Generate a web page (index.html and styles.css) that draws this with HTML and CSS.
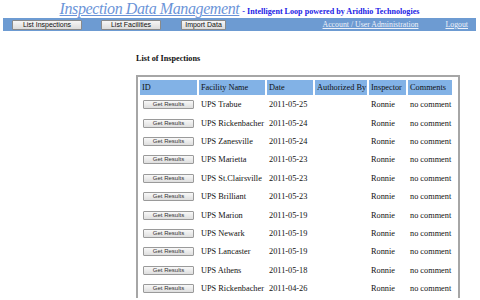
FILE: index.html
```html
<!DOCTYPE html>
<html>
<head>
<meta charset="utf-8">
<link rel="stylesheet" href="styles.css">
</head>
<body>
<header class="top">
  <div class="brand">
    <a class="title" href="#">Inspection Data Management</a>
    <span class="sub">- Intelligent Loop powered by Aridhio Technologies</span>
  </div>
  <nav class="bar">
    <div class="btns">
      <button class="nb nb1">List Inspections</button>
      <button class="nb nb2">List Facilities</button>
      <button class="nb nb3">Import Data</button>
    </div>
    <div class="links">
      <a href="#">Account / User Administration</a>
      <a href="#">Logout</a>
    </div>
  </nav>
</header>
<main class="content">
  <h2 class="heading">List of Inspections</h2>
  <div class="box">
    <table class="grid">
      <colgroup>
        <col class="c1"><col class="c2"><col class="c3"><col class="c4"><col class="c5"><col class="c6">
      </colgroup>
      <thead>
        <tr><th>ID</th><th>Facility Name</th><th>Date</th><th>Authorized By</th><th>Inspector</th><th>Comments</th></tr>
      </thead>
      <tbody>
        <tr><td><button class="gr">Get Results</button></td><td>UPS Trabue</td><td>2011-05-25</td><td></td><td>Ronnie</td><td>no comment</td></tr>
        <tr><td><button class="gr">Get Results</button></td><td>UPS Rickenbacher</td><td>2011-05-24</td><td></td><td>Ronnie</td><td>no comment</td></tr>
        <tr><td><button class="gr">Get Results</button></td><td>UPS Zanesville</td><td>2011-05-24</td><td></td><td>Ronnie</td><td>no comment</td></tr>
        <tr><td><button class="gr">Get Results</button></td><td>UPS Marietta</td><td>2011-05-23</td><td></td><td>Ronnie</td><td>no comment</td></tr>
        <tr><td><button class="gr">Get Results</button></td><td>UPS St.Clairsville</td><td>2011-05-23</td><td></td><td>Ronnie</td><td>no comment</td></tr>
        <tr><td><button class="gr">Get Results</button></td><td>UPS Brilliant</td><td>2011-05-23</td><td></td><td>Ronnie</td><td>no comment</td></tr>
        <tr><td><button class="gr">Get Results</button></td><td>UPS Marion</td><td>2011-05-19</td><td></td><td>Ronnie</td><td>no comment</td></tr>
        <tr><td><button class="gr">Get Results</button></td><td>UPS Newark</td><td>2011-05-19</td><td></td><td>Ronnie</td><td>no comment</td></tr>
        <tr><td><button class="gr">Get Results</button></td><td>UPS Lancaster</td><td>2011-05-19</td><td></td><td>Ronnie</td><td>no comment</td></tr>
        <tr><td><button class="gr">Get Results</button></td><td>UPS Athens</td><td>2011-05-18</td><td></td><td>Ronnie</td><td>no comment</td></tr>
        <tr><td><button class="gr">Get Results</button></td><td>UPS Rickenbacher</td><td>2011-04-26</td><td></td><td>Ronnie</td><td>no comment</td></tr>
      </tbody>
    </table>
  </div>
</main>
</body>
</html>
```
FILE: styles.css
```css
html, body {
  margin: 0;
  padding: 0;
  background: #ffffff;
  font-family: "Liberation Serif", "Times New Roman", serif;
  overflow: hidden;
}
.top {
  padding: 0 4px 0 3px;
}
.brand {
  height: 18px;
  display: flex;
  align-items: baseline;
  justify-content: center;
  gap: 3px;
  line-height: 17px;
}
.title {
  font-style: italic;
  font-size: 16px;
  letter-spacing: -0.4px;
  color: #6b94d8;
  text-decoration: underline;
  text-decoration-thickness: 1px;
  text-underline-offset: 1px;
}
.sub {
  font-weight: bold;
  font-size: 8.1px;
  color: #1b1be6;
}
.bar {
  height: 13px;
  background: #6d9bd2;
  display: flex;
  align-items: center;
  justify-content: space-between;
}
.btns {
  display: flex;
  align-items: center;
}
.nb {
  height: 10px;
  padding: 0;
  margin: 0;
  border: 1px solid #8a8a8a;
  border-radius: 1px;
  background: linear-gradient(#f6f6f6, #dcdcdc);
  font-family: "Liberation Sans", Arial, sans-serif;
  font-size: 7px;
  line-height: 8px;
  color: #111;
}
.nb1 { width: 70px; margin-left: 9px; }
.nb2 { width: 60px; margin-left: 19px; }
.nb3 { width: 45px; margin-left: 20px; }
.links {
  display: flex;
  gap: 27px;
  padding-right: 8px;
}
.links a {
  font-size: 7.8px;
  color: #eef2fa;
  text-decoration: underline;
  line-height: 13px;
}
.content {
  padding-left: 136px;
}
.heading {
  margin: 0;
  padding-top: 22px;
  font-size: 8.2px;
  font-weight: bold;
  color: #111;
  line-height: 12px;
  height: 22px;
}
.box {
  width: 316px;
  border: 2px solid #a6a6a6;
  border-bottom: none;
  padding: 3px 4px 0 0;
}
.grid {
  border-collapse: separate;
  border-spacing: 2px 0;
  table-layout: fixed;
  width: 316px;
  font-size: 8.3px;
  color: #111;
}
.c1 { width: 57px; }
.c2 { width: 66px; }
.c3 { width: 46px; }
.c4 { width: 52px; }
.c5 { width: 37px; }
.c6 { width: 44px; }
.grid th {
  background: #82b2e6;
  font-weight: normal;
  text-align: left;
  height: 15px;
  padding: 0 0 0 2px;
  white-space: nowrap;
  overflow: hidden;
}
.grid td {
  height: 18.4px;
  padding: 0 0 0 2px;
  white-space: nowrap;
  vertical-align: middle;
}
.grid tbody tr:first-child td {
  height: 19px;
}
.gr {
  width: 51px;
  height: 9px;
  padding: 0;
  margin: 0 0 0 1px;
  border: 1px solid #9a9a9a;
  border-radius: 1px;
  background: linear-gradient(#f8f8f8, #dedede);
  font-family: "Liberation Sans", Arial, sans-serif;
  font-size: 6px;
  line-height: 7px;
  color: #333;
  display: block;
}
```
